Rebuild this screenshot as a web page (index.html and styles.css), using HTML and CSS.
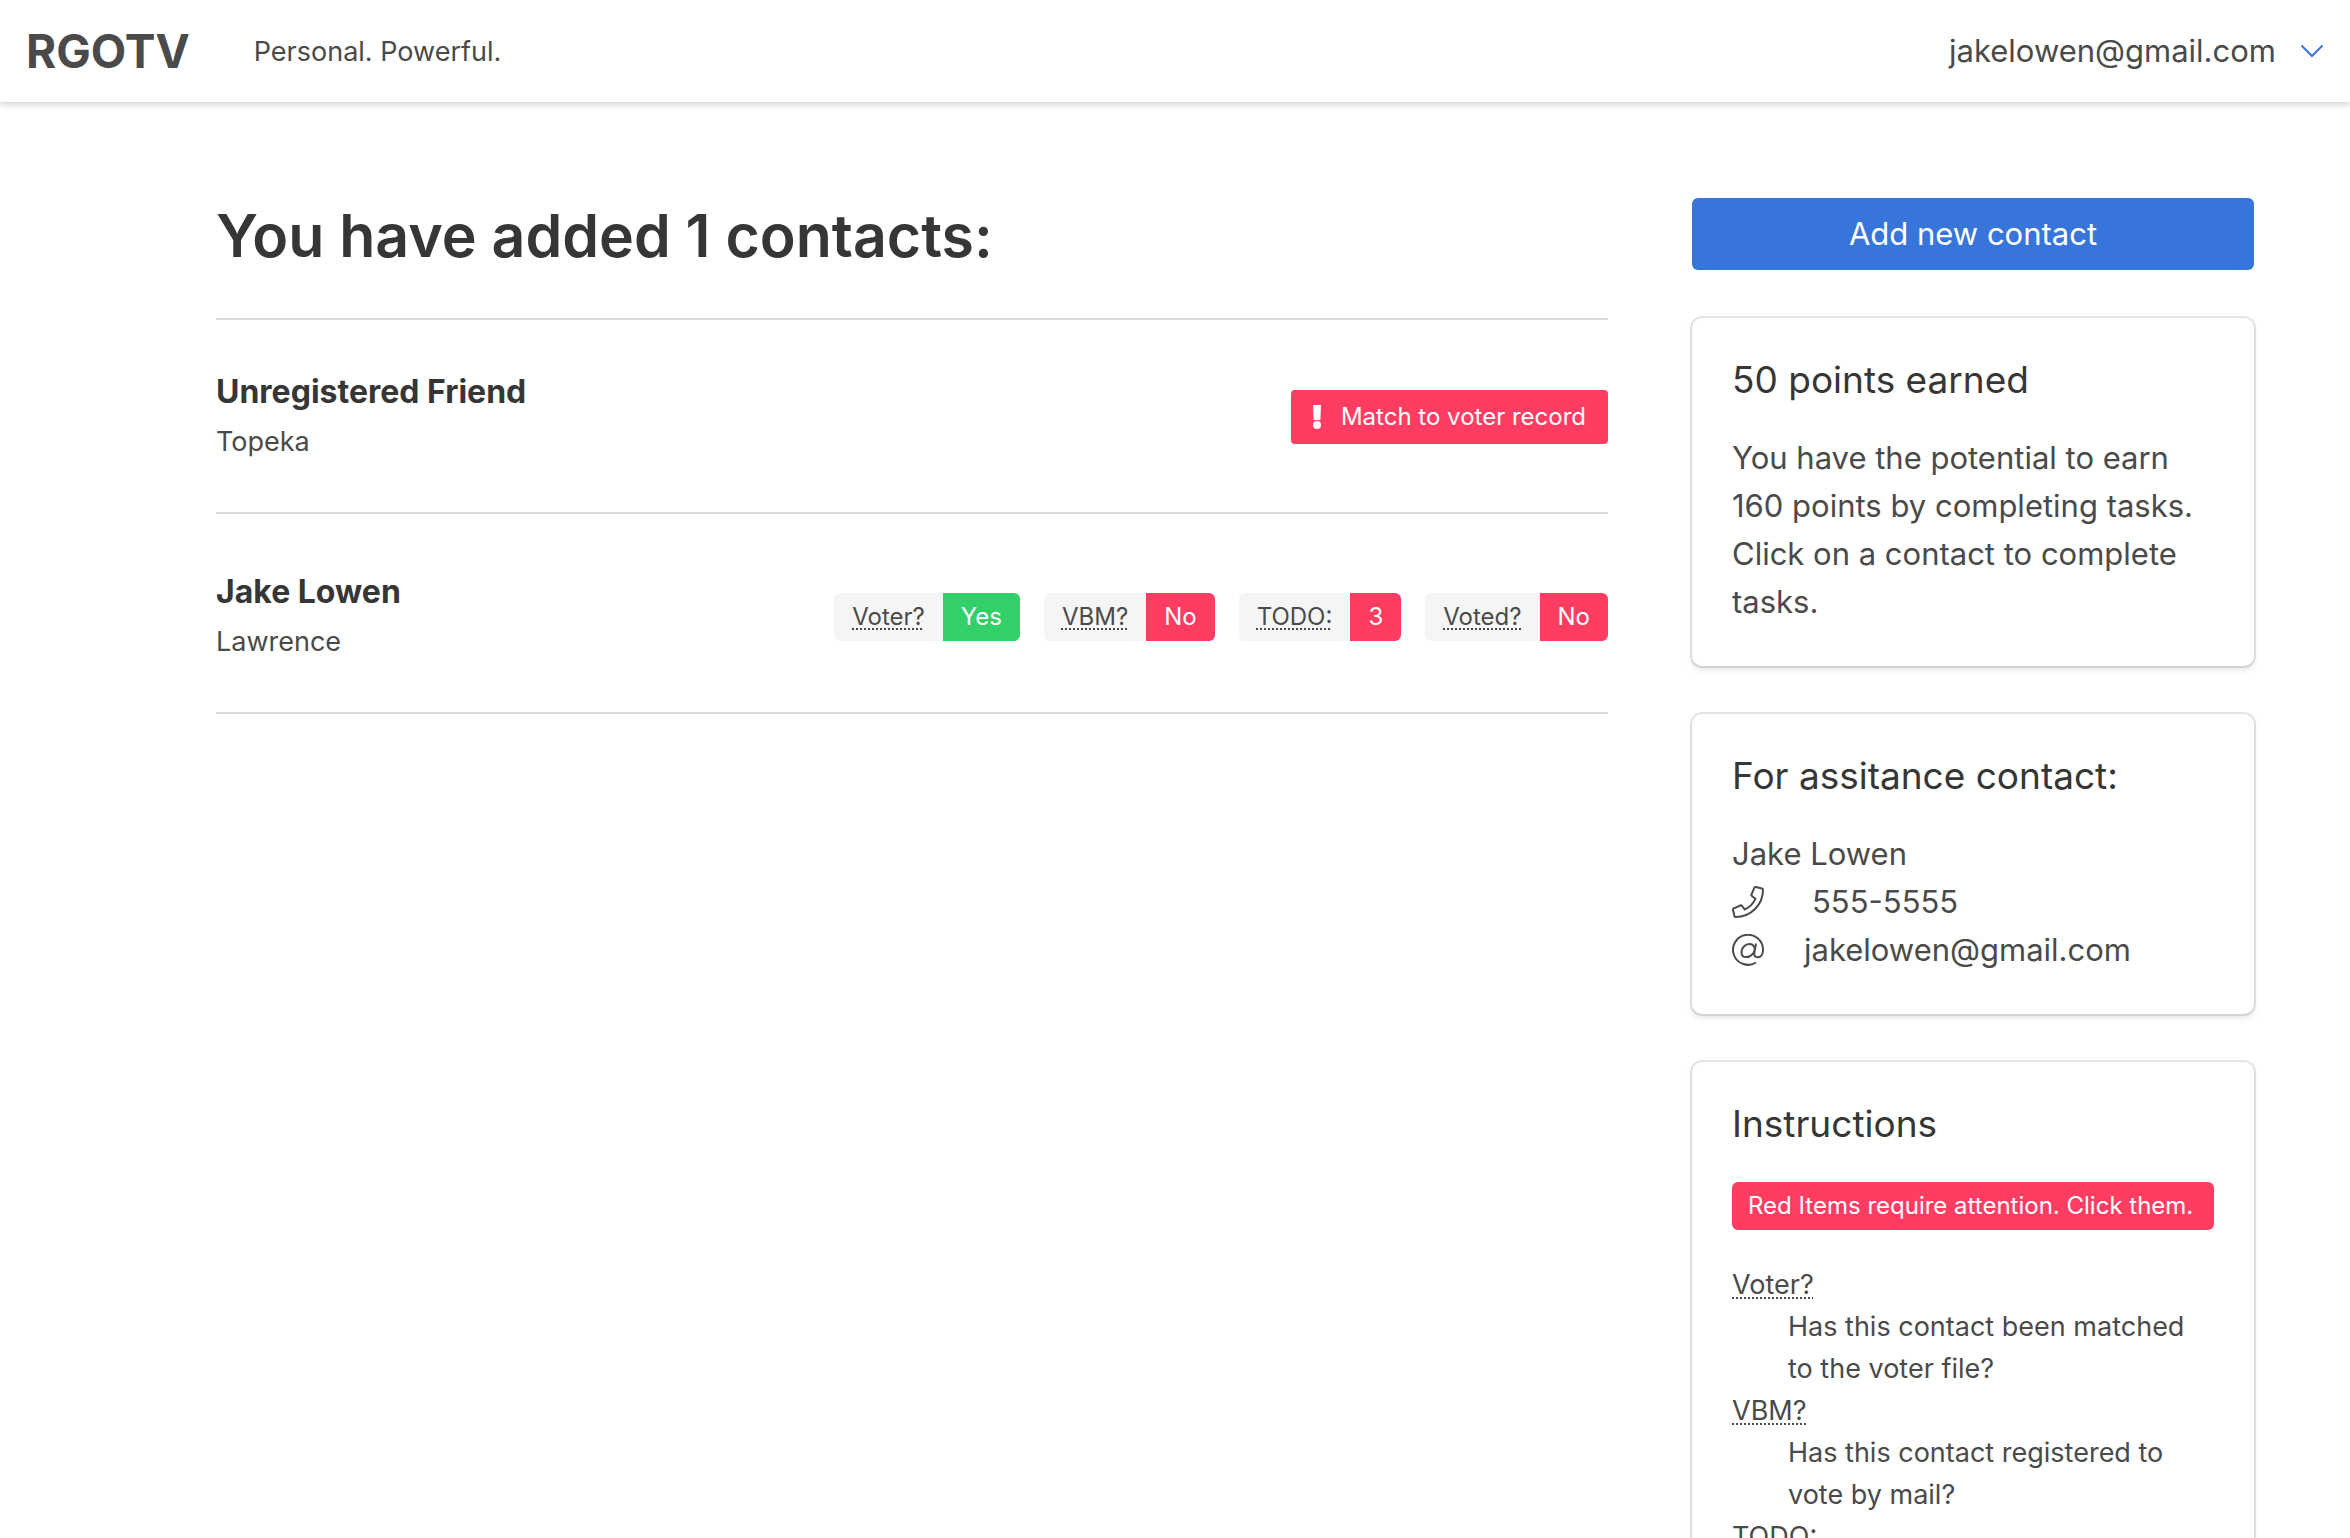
FILE: index.html
```html
<!DOCTYPE html>
<html lang="en">
<head>
  <meta charset="utf-8">
  <title>RGOTV</title>
  <meta name="viewport" content="width=device-width, initial-scale=1">
  <link rel="stylesheet" href="styles.css">
</head>
<body>
  <header class="navbar">
    <a class="brand" href="#">RGOTV</a>
    <span class="tagline">Personal. Powerful.</span>
    <button class="account" type="button">
      <span>jakelowen@gmail.com</span>
      <svg class="chevron" viewBox="0 0 24 14" aria-hidden="true"><path d="M1.500 1.500 12 12 22.500 1.500"/></svg>
    </button>
  </header>

  <div class="page">
    <main class="contacts">
      <h1 class="page-title">You have added 1 contacts:</h1>
      <ul class="contact-list">
        <li class="contact">
          <div>
            <a class="contact-name" href="#">Unregistered Friend</a>
            <p class="contact-city">Topeka</p>
          </div>
          <button class="match-button" type="button">
            <svg class="exclamation" viewBox="0 0 8 24" aria-hidden="true"><path d="M0 0h8l-.6 15H.6z"/><circle cx="4" cy="20" r="4"/></svg>
            <span>Match to voter record</span>
          </button>
        </li>
        <li class="contact">
          <div>
            <a class="contact-name" href="#">Jake Lowen</a>
            <p class="contact-city">Lawrence</p>
          </div>
          <div class="tag-groups">
            <span class="tags"><span class="tag"><abbr title="Matched to the voter file">Voter?</abbr></span><span class="tag tag-success">Yes</span></span>
            <span class="tags"><span class="tag"><abbr title="Vote by mail">VBM?</abbr></span><span class="tag tag-danger">No</span></span>
            <span class="tags"><span class="tag"><abbr title="Tasks to do">TODO:</abbr></span><span class="tag tag-danger">3</span></span>
            <span class="tags"><span class="tag"><abbr title="Has voted">Voted?</abbr></span><span class="tag tag-danger">No</span></span>
          </div>
        </li>
      </ul>
    </main>

    <aside class="sidebar">
      <button class="add-button" type="button">Add new contact</button>

      <section class="box">
        <h2 class="box-title">50 points earned</h2>
        <p>You have the potential to earn 160 points by completing tasks. Click on a contact to complete tasks.</p>
      </section>

      <section class="box">
        <h2 class="box-title">For assitance contact:</h2>
        <p>Jake Lowen</p>
        <p class="detail detail-phone">
          <svg class="icon icon-stroke" viewBox="0 0 32 32" aria-hidden="true"><path d="M23.800 1 30 2.400c.6.2 1 .6 1 1.300C31 18.800 18.800 31 3.700 31c-.7 0-1.200-.4-1.300-1L1 23.800c-.1-.7.200-1.300.8-1.500l6.500-2.800c.6-.3 1.200-.1 1.600.4l2.900 3.500c4.600-2.100 8.400-5.900 10.600-10.600l-3.500-2.900c-.5-.4-.7-1-.4-1.600l2.800-6.500c.3-.6.900-.9 1.500-.8z"/></svg>
          <a href="#">555-5555</a>
        </p>
        <p class="detail">
          <svg class="icon icon-stroke" viewBox="0 0 32 32" aria-hidden="true"><path d="M24 28.500A15 15 0 1 1 31 16c0 4.500-2.200 7.200-5.200 7.200-3 0-4-2-3.400-4.800L24 9.500M22.800 15c-.7-3.200-2.500-5-5.300-5-4.500 0-8 4-8 8.200 0 3 1.900 4.900 4.600 4.900 4.500 0 8.200-3.800 8.700-8.100z"/></svg>
          <a href="#">jakelowen@gmail.com</a>
        </p>
      </section>

      <section class="box">
        <h2 class="box-title">Instructions</h2>
        <span class="notice">Red Items require attention. Click them.</span>
        <dl class="glossary">
          <dt><abbr title="Matched to the voter file">Voter?</abbr></dt>
          <dd>Has this contact been matched to the voter file?</dd>
          <dt><abbr title="Vote by mail">VBM?</abbr></dt>
          <dd>Has this contact registered to vote by mail?</dd>
          <dt><abbr title="Tasks to do">TODO:</abbr></dt>
        </dl>
      </section>
    </aside>
  </div>
</body>
</html>
```
FILE: styles.css
```css
*,
*::before,
*::after {
  box-sizing: border-box;
}

html {
  overflow: hidden;
}

body {
  margin: 0;
  background: #fff;
  color: #4a4a4a;
  font: 400 31px/48px Inter, "Liberation Sans", sans-serif;
}

h1,
h2,
p,
ul,
dl,
dd {
  margin: 0;
  padding: 0;
}

a {
  color: inherit;
  text-decoration: none;
}

button {
  border: 0;
  background: none;
  color: inherit;
  font: inherit;
  cursor: pointer;
}

abbr {
  text-decoration: underline dotted 2px;
  text-decoration-skip-ink: none;
  text-underline-offset: 3px;
}

.navbar {
  display: flex;
  align-items: center;
  height: 102px;
  padding: 0 26px;
  box-shadow: 0 2px 6px 1px rgba(10, 10, 10, 0.16);
}

.brand {
  font-size: 46px;
  font-weight: 700;
}

.tagline {
  margin-left: 64px;
  padding-top: 2px;
  font-size: 27px;
}

.account {
  display: flex;
  align-items: center;
  gap: 24px;
  margin-left: auto;
  padding: 0;
}

.chevron {
  width: 24px;
  height: 14px;
  fill: none;
  stroke: #3775da;
  stroke-width: 2;
}

.page {
  display: grid;
  grid-template-columns: minmax(0, 1fr) 562px;
  gap: 84px;
  padding: 96px 96px 0 216px;
}

.page-title {
  padding: 2px 0 46px;
  border-bottom: 2px solid #dbdbdb;
  color: #363636;
  font-size: 59px;
  font-weight: 600;
  line-height: 72px;
}

.contact-list {
  list-style: none;
}

.contact {
  display: flex;
  align-items: center;
  justify-content: space-between;
  height: 200px;
  padding-top: 8px;
  border-bottom: 2px solid #dbdbdb;
}

.contact:first-child {
  height: 194px;
  padding-top: 2px;
}

.contact-name {
  color: #363636;
  font-size: 32px;
  font-weight: 700;
}

.contact-city {
  margin-top: 2px;
  font-size: 27px;
}

.match-button {
  display: flex;
  align-items: center;
  gap: 20px;
  height: 54px;
  padding: 0 22px;
  border-radius: 4px;
  background: #ff3d63;
  color: #fff;
  font-size: 24px;
}

.exclamation {
  width: 8px;
  height: 24px;
  fill: #fff;
}

.tag-groups {
  display: flex;
  gap: 24px;
}

.tags {
  display: flex;
  overflow: hidden;
  border-radius: 6px;
}

.tag {
  height: 48px;
  padding: 0 18px;
  background: #f5f5f5;
  font-size: 24px;
}

.tag-success {
  background: #32d068;
  color: #fff;
}

.tag-danger {
  background: #ff3d63;
  color: #fff;
}

.sidebar {
  display: flex;
  flex-direction: column;
  gap: 48px;
}

.add-button {
  height: 72px;
  border-radius: 6px;
  background: #3775da;
  color: #fff;
}

.box {
  padding: 40px;
  border-radius: 10px;
  box-shadow: 0 4px 6px rgba(10, 10, 10, 0.1), 0 0 0 2px rgba(10, 10, 10, 0.1);
}

.box-title {
  margin-bottom: 32px;
  color: #363636;
  font-size: 37px;
  font-weight: 400;
  line-height: 44px;
}

.detail {
  display: flex;
  align-items: center;
  gap: 40px;
}

.detail-phone {
  gap: 48px;
}

.icon {
  width: 32px;
  height: 32px;
}

.icon-stroke {
  fill: none;
  stroke: #4a4a4a;
  stroke-width: 2;
}

.notice {
  display: block;
  margin-top: 36px;
  padding: 0 16px;
  border-radius: 6px;
  background: #ff3d63;
  color: #fff;
  font-size: 24px;
  white-space: nowrap;
}

.glossary {
  margin-top: 34px;
  font-size: 27px;
  line-height: 42px;
}

.glossary dd {
  margin-left: 56px;
}
```
